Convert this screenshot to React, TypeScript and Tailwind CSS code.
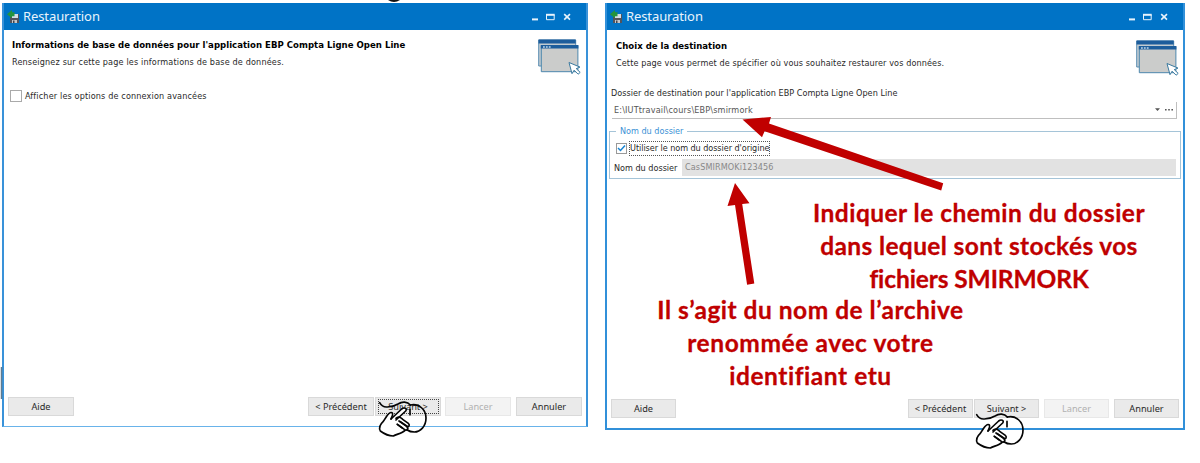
import React from "react";

function SaveIcon() {
  return (
    <svg width="13" height="14" viewBox="0 0 13 14" className="shrink-0">
      <path d="M3 4h9v9H3z" fill="#53535b" />
      <path d="M5 4h6v4H5z" fill="#d5dde4" />
      <path d="M5 10h5v3H5z" fill="#c5c5c9" />
      <path d="M6 10.5h1.5V13H6z" fill="#44444b" />
      <path d="M0 4.2 5 0v2.2h2.5v4H5v2z" fill="#25943c" />
    </svg>
  );
}

function WindowControls() {
  return (
    <svg width="42" height="10" viewBox="0 0 42 10" className="shrink-0" fill="none" stroke="#e8f3fc">
      <path d="M-.5 7.4H6" strokeWidth="2" />
      <path d="M14.5 3h7.7v4.7h-7.7z" strokeWidth="1" />
      <path d="M14 2.7h8.7" strokeWidth="1.8" />
      <path d="m32.2 2.1 5.8 5.6m0-5.6-5.8 5.6" strokeWidth="1.6" />
    </svg>
  );
}

function PagesIcon() {
  return (
    <svg width="44" height="37" viewBox="0 0 44 37" className="shrink-0">
      <path d="M.7 1h37v26H.7z" fill="#c2cbd0" stroke="#5b8eb2" strokeWidth="1" />
      <path d="M.5.5h37.2v4H.5z" fill="#1d5d9c" />
      <path d="M3.3 6.5h36.6v26.2H3.3z" fill="#cbcccb" stroke="#4d87ad" strokeWidth="1" />
      <path d="M2.8 6h37.6v3.6H2.8z" fill="#1d5d9c" />
      <path d="M5 8h1.8m1.1 0h1.8m1.1 0h1.8" stroke="#bed6ea" strokeWidth="1.4" />
      <path d="m31 23.5 11 4.6-3.8 1.5 4 3.8-2.1 1.8-4-4-2.1 3.5z" fill="#fff" stroke="#39799f" strokeWidth="1" />
    </svg>
  );
}

function Hand({ className }: { className: string }) {
  return (
    <svg
      viewBox="0 0 180 138"
      className={className}
      fill="none"
      stroke="#050505"
      strokeWidth="5"
      strokeLinecap="round"
      strokeLinejoin="round"
    >
      <path
        d="M42 59C46 52 52 46 58 51 61 54 56 62 54 69L86 39C94 32 105 37 98 45L75 66C81 62 87 67 87 72 95 69 101 74 99 80 109 80 113 89 107 94 105 101 98 101 94 104 86 112 71 115 63 120 48 119 34 111 21 104 18 91 28 80 33 70Z"
        fill="#fff"
        stroke="none"
      />
      <path d="M20 20C25 29 31 33 40 33 58 34 65 30 75 24 87 16 103 16 112 27" />
      <path d="M112 27C139 21 159 42 159 66 159 91 142 108 124 108 115 108 108 106 103 102" />
      <path d="M54 69C57 61 62 53 57 50 51 47 44 56 40 62L31 76C21 85 18 97 22 105 34 114 49 120 61 120 72 114 88 112 96 103" />
      <path d="M54 69 86 39C93 33 104 37 98 45L69 72" />
      <path d="M69 67C75 60 85 64 89 70L106 82C112 88 107 94 101 90L82 77" />
      <path d="M78 75 101 91C109 99 101 105 94 100L73 85" />
      <path d="M73 85 88 96M111 40V56" />
    </svg>
  );
}

function Titlebar() {
  return (
    <div className="flex h-[27px] shrink-0 items-center bg-[#0073c6] pl-[3px] pr-[12px]">
      <SaveIcon />
      <span className="ml-[3px] flex-1 pb-px font-['Noto_Sans'] text-[13px] leading-[20px] tracking-[-0.1px] text-[#e8f3fc]">
        Restauration
      </span>
      <WindowControls />
    </div>
  );
}

function Button({
  children,
  disabled,
  focused,
  wide,
}: {
  children: React.ReactNode;
  disabled?: boolean;
  focused?: boolean;
  wide?: boolean;
}) {
  return (
    <div
      className={`flex h-[19px] shrink-0 items-center justify-center border font-['Noto_Sans'] text-[9.2px] leading-[12px] ${
        wide ? "w-[66px]" : "w-[65px]"
      } ${disabled ? "border-[#e8e8e8] bg-[#f3f3f3] text-[#b1b1b1]" : "border-[#d9d9d9] bg-[#eaeaea] text-[#292929]"}`}
    >
      {focused ? (
        <span className="flex h-[15px] w-[61px] items-center justify-center border border-dotted border-[#444]">{children}</span>
      ) : (
        children
      )}
    </div>
  );
}

export default function App() {
  return (
    <div className="relative flex h-[463px] w-[1200px] items-start overflow-hidden bg-white font-['DejaVu_Sans_Condensed','DejaVu_Sans',sans-serif] text-[9px] leading-[12px] text-[#292929]">
      <section className="ml-[2px] mt-[3px] flex h-[424px] w-[586px] flex-col border-x-2 border-b border-x-[#3992d9] border-b-[#69b3ea] bg-white">
        <Titlebar />
        <header className="flex h-[57px] justify-between pl-[8px] pr-[4px]">
          <div className="flex flex-col whitespace-nowrap pt-[9px]">
            <h1 className="text-[9.5px] font-bold leading-[12px] tracking-[0.03px] text-black">
              Informations de base de données pour l'application EBP Compta Ligne Open Line
            </h1>
            <p className="mt-[5px] tracking-[0.16px]">Renseignez sur cette page les informations de base de données.</p>
          </div>
          <div className="pt-[9px]">
            <PagesIcon />
          </div>
        </header>
        <label className="flex items-center pl-[6px] pt-[3px]">
          <span className="h-[12px] w-[12px] border border-[#aaa] bg-white" />
          <span className="ml-[3px] tracking-[0.15px]">Afficher les options de connexion avancées</span>
        </label>
        <footer className="mt-auto flex pb-[10px] pl-[4px] pr-[4px]">
          <Button wide>Aide</Button>
          <div className="ml-auto flex">
            <Button wide>&lt; Précédent</Button>
            <div className="ml-px"><Button wide focused>Suivant &gt;</Button></div>
            <div className="ml-[4px]"><Button wide disabled>Lancer</Button></div>
            <div className="ml-[5px]"><Button wide>Annuler</Button></div>
          </div>
        </footer>
      </section>

      <section className="ml-[17px] mt-[3px] flex h-[427px] w-[580px] flex-col border-x-2 border-b-2 border-[#3190d9] bg-white">
        <Titlebar />
        <header className="flex h-[54px] justify-between pl-[9px] pr-[3px]">
          <div className="flex flex-col whitespace-nowrap pt-[10px]">
            <h1 className="text-[9.5px] font-bold leading-[12px] text-black">Choix de la destination</h1>
            <p className="mt-[5px] tracking-[0.11px]">Cette page vous permet de spécifier où vous souhaitez restaurer vos données.</p>
          </div>
          <div className="pt-[10px]">
            <PagesIcon />
          </div>
        </header>
        <div className="pl-[4px] pr-[6px] pt-[3px]">
          <div className="tracking-[0.03px]">Dossier de destination pour l'application EBP Compta Ligne Open Line</div>
          <div className="ml-px mt-[3px] flex h-[17px] items-center border-b border-r border-[#bfbfbf] pl-[2px] pr-[2px] text-[#555]">
            <span className="flex-1 tracking-[0.16px]">E:\IUTtravail\cours\EBP\smirmork</span>
            <svg width="20" height="8" viewBox="0 0 20 8" fill="#555">
              <path d="M1 2.2h5L3.5 5zM11 3h1.6v1.6H11zM14.2 3h1.6v1.6h-1.6zM17.4 3H19v1.6h-1.6z" />
            </svg>
          </div>
        </div>
        <fieldset className="ml-[2px] mr-[2px] mt-[6px] h-[54px] border border-[#a5c4d8] px-[4px]">
          <legend className="ml-[2px] px-[4px] leading-[12px] text-[#3b91d5]">Nom du dossier</legend>
          <label className="mt-[3px] flex h-[17px] items-center">
            <span className="ml-[2px] flex h-[11px] w-[11px] items-center justify-center border border-[#999] bg-white">
              <svg width="9" height="9" viewBox="0 0 9 9" fill="none" stroke="#1683d2" strokeWidth="1.5">
                <path d="m1 4 2.5 2.5L8 1.5" />
              </svg>
            </span>
            <span className="ml-[2px] h-[15px] border border-dotted border-[#555] leading-[13px] tracking-[-0.05px]">
              Utiliser le nom du dossier d'origine
            </span>
          </label>
          <div className="mt-[2px] flex items-center">
            <span className="w-[68px] whitespace-nowrap">Nom du dossier</span>
            <span className="h-[17px] flex-1 bg-[#e2e2e2] pl-[3px] leading-[17px] tracking-[0.1px] text-[#888]">CasSMIRMOKi123456</span>
          </div>
        </fieldset>
        <footer className="mt-auto flex pb-[10px] pl-[4px] pr-[4px]">
          <Button>Aide</Button>
          <div className="ml-auto flex">
            <Button>&lt; Précédent</Button>
            <div className="ml-px"><Button>Suivant &gt;</Button></div>
            <div className="ml-[5px]"><Button disabled>Lancer</Button></div>
            <div className="ml-[5px]"><Button>Annuler</Button></div>
          </div>
        </footer>
      </section>

      <svg className="absolute left-0 top-0 h-[463px] w-[1200px]" viewBox="0 0 1200 463">
        <path d="M742.5 119.5 771 117l-2 6.6L943.2 183.2l-2 7.2L764.6 131.2l-2.6 6z" fill="#c00000" />
        <path d="m735 183 14.5 20.2-7.3.9 12.1 79.5-7.2 1.1L735 205l-7.5 1z" fill="#c00000" />
        <path d="M388 0q6 4 12 0z" fill="#111" />
        <path d="M1.5 367v32" stroke="#5e7b91" strokeWidth="1.5" />
      </svg>
      <div className="absolute left-[778px] top-[196px] flex w-[402px] flex-col items-center whitespace-nowrap font-['Lato'] text-[24.5px] font-bold leading-[33px] text-[#c00000] [-webkit-text-stroke:0.3px_#c00000]">
        <span className="tracking-[0.47px]">Indiquer le chemin du dossier</span>
        <span className="tracking-[0.37px]">dans lequel sont stockés vos</span>
        <span className="tracking-[-0.1px]">fichiers SMIRMORK</span>
      </div>
      <div className="absolute left-[640px] top-[293px] flex w-[341px] flex-col items-center whitespace-nowrap font-['Lato'] text-[24.5px] font-bold leading-[33px] text-[#c00000] [-webkit-text-stroke:0.3px_#c00000]">
        <span className="tracking-[0.5px]">Il s’agit du nom de l’archive</span>
        <span className="tracking-[0.6px]">renommée avec votre</span>
        <span className="tracking-[0.55px]">identifiant etu</span>
      </div>
      <Hand className="absolute left-[373px] top-[396px] h-[46px] w-[60px]" />
      <Hand className="absolute left-[970px] top-[408px] h-[46px] w-[60px]" />
    </div>
  );
}
